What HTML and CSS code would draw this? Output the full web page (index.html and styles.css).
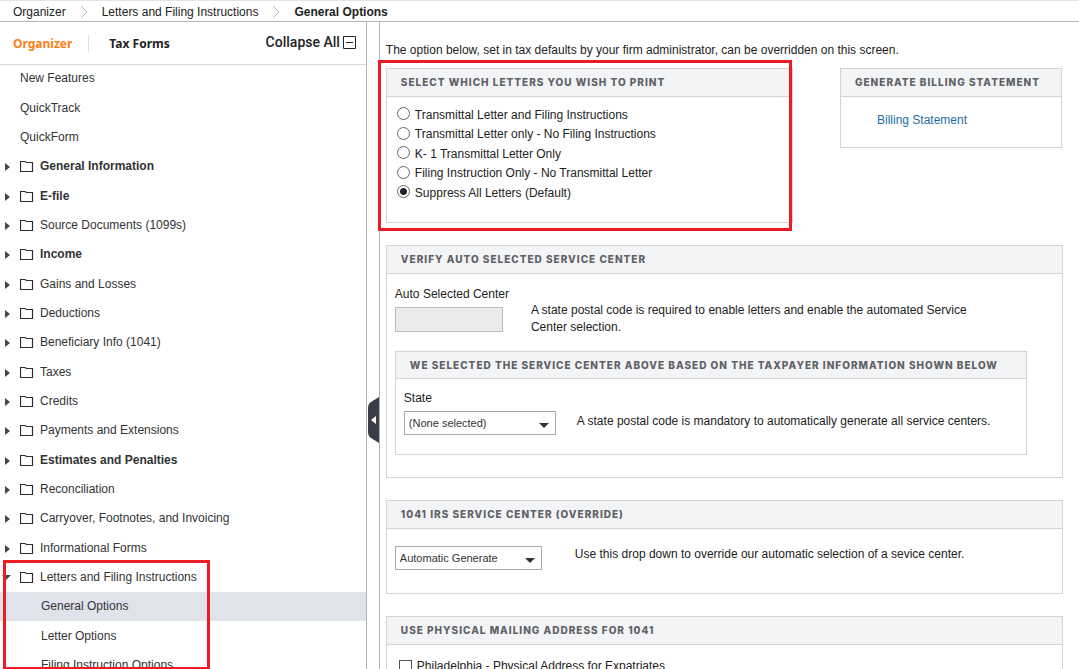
FILE: index.html
```html
<!DOCTYPE html>
<html lang="en">
<head>
    <meta charset="utf-8">
    <title>General Options</title>
    <link rel="stylesheet" href="styles.css">
</head>
<body>
    <svg class="defs" width="0" height="0">
        <symbol id="folder" viewBox="0 0 14 13">
            <path d="M.5 11.5V1.5h4.5l1.5 1h6v9z" fill="none" stroke="#2b2d33" stroke-width="1.2"/>
        </symbol>
    </svg>

    <nav class="breadcrumb">
        <a href="#">Organizer</a>
        <svg class="chevron" width="8" height="14" viewBox="0 0 8 14"><path d="M1 1l6 6-6 6" fill="none" stroke="#b5b5b5"/></svg>
        <a href="#">Letters and Filing Instructions</a>
        <svg class="chevron" width="8" height="14" viewBox="0 0 8 14"><path d="M1 1l6 6-6 6" fill="none" stroke="#b5b5b5"/></svg>
        <span class="current">General Options</span>
    </nav>

    <div class="workspace">
        <aside class="sidebar">
            <div class="sidebar-header">
                <a href="#" class="tab active">Organizer</a>
                <a href="#" class="tab">Tax Forms</a>
                <button class="collapse-all">Collapse All
                    <svg width="13" height="13" viewBox="0 0 13 13"><path d="M.5.5h12v12H.5zM3 6.5h7" fill="none" stroke="#222"/></svg>
                </button>
            </div>
            <ul class="tree">
                <li><a href="#" class="leaf">New Features</a></li>
                <li><a href="#" class="leaf">QuickTrack</a></li>
                <li><a href="#" class="leaf">QuickForm</a></li>
                <li><a href="#" class="folder bold"><svg><use href="#folder"/></svg>General Information</a></li>
                <li><a href="#" class="folder bold"><svg><use href="#folder"/></svg>E-file</a></li>
                <li><a href="#" class="folder"><svg><use href="#folder"/></svg>Source Documents (1099s)</a></li>
                <li><a href="#" class="folder bold"><svg><use href="#folder"/></svg>Income</a></li>
                <li><a href="#" class="folder"><svg><use href="#folder"/></svg>Gains and Losses</a></li>
                <li><a href="#" class="folder"><svg><use href="#folder"/></svg>Deductions</a></li>
                <li><a href="#" class="folder"><svg><use href="#folder"/></svg>Beneficiary Info (1041)</a></li>
                <li><a href="#" class="folder"><svg><use href="#folder"/></svg>Taxes</a></li>
                <li><a href="#" class="folder"><svg><use href="#folder"/></svg>Credits</a></li>
                <li><a href="#" class="folder"><svg><use href="#folder"/></svg>Payments and Extensions</a></li>
                <li><a href="#" class="folder bold"><svg><use href="#folder"/></svg>Estimates and Penalties</a></li>
                <li><a href="#" class="folder"><svg><use href="#folder"/></svg>Reconciliation</a></li>
                <li><a href="#" class="folder"><svg><use href="#folder"/></svg>Carryover, Footnotes, and Invoicing</a></li>
                <li><a href="#" class="folder"><svg><use href="#folder"/></svg>Informational Forms</a></li>
                <li class="marked">
                    <a href="#" class="folder open"><svg><use href="#folder"/></svg>Letters and Filing Instructions</a>
                    <ul>
                        <li><a href="#" class="child selected">General Options</a></li>
                        <li><a href="#" class="child">Letter Options</a></li>
                        <li><a href="#" class="child">Filing Instruction Options</a></li>
                    </ul>
                    <div class="highlight highlight-tree"></div>
                </li>
            </ul>
        </aside>

        <div class="splitter">
            <button class="splitter-handle" aria-label="Collapse panel">
                <svg width="11" height="46" viewBox="0 0 11 46"><path d="M11 0v46L3 41Q0 39 0 35V11Q0 7 3 5z" fill="#3a3d45"/><path d="M3 23l5-4v8z" fill="#fff"/></svg>
            </button>
        </div>

        <main class="content">
            <p class="intro">The option below, set in tax defaults by your firm administrator, can be overridden on this screen.</p>

            <div class="top-row">
                <section class="panel letters">
                    <h2>Select which letters you wish to print</h2>
                    <div class="radio-list">
                        <label><input type="radio" name="letters">Transmittal Letter and Filing Instructions</label>
                        <label><input type="radio" name="letters">Transmittal Letter only - No Filing Instructions</label>
                        <label><input type="radio" name="letters">K- 1 Transmittal Letter Only</label>
                        <label><input type="radio" name="letters">Filing Instruction Only - No Transmittal Letter</label>
                        <label><input type="radio" name="letters" checked>Suppress All Letters (Default)</label>
                    </div>
                    <div class="highlight highlight-letters"></div>
                </section>

                <section class="panel billing">
                    <h2>Generate billing statement</h2>
                    <a href="#" class="link">Billing Statement</a>
                </section>
            </div>

            <section class="panel">
                <h2>Verify auto selected service center</h2>
                <div class="panel-body">
                    <div class="auto-row">
                        <div class="field">
                            <label for="autoCenter">Auto Selected Center</label>
                            <input type="text" id="autoCenter" disabled>
                        </div>
                        <p class="auto-note">A state postal code is required to enable letters and enable the automated Service Center selection.</p>
                    </div>

                    <section class="panel inner">
                        <h2>We selected the service center above based on the taxpayer information shown below</h2>
                        <div class="state-row">
                            <div class="field">
                                <label for="state">State</label>
                                <div class="select-box state-select">
                                    <select id="state"><option>(None selected)</option></select>
                                </div>
                            </div>
                            <p>A state postal code is mandatory to automatically generate all service centers.</p>
                        </div>
                    </section>
                </div>
            </section>

            <section class="panel">
                <h2>1041 IRS service center (override)</h2>
                <div class="override-row">
                    <div class="select-box override-select">
                        <select id="override" aria-label="Service center override"><option>Automatic Generate</option></select>
                    </div>
                    <p>Use this drop down to override our automatic selection of a sevice center.</p>
                </div>
            </section>

            <section class="panel">
                <h2>Use physical mailing address for 1041</h2>
                <label class="check-row"><input type="checkbox">Philadelphia - Physical Address for Expatriates</label>
            </section>
        </main>
    </div>
</body>
</html>
```
FILE: styles.css
```css
* {
    box-sizing: border-box;
}
body {
    margin: 0;
    height: 100vh;
    overflow: hidden;
    display: flex;
    flex-direction: column;
    font-family: "Liberation Sans", Arial, sans-serif;
    font-size: 12px;
    line-height: 17px;
    color: #222;
    background: #fff;
}
a {
    color: inherit;
    text-decoration: none;
}
p, h2, ul {
    margin: 0;
    padding: 0;
}
button {
    padding: 0;
    border: 0;
    background: none;
    color: inherit;
    cursor: pointer;
}
.defs {
    position: absolute;
}

/* breadcrumb */
.breadcrumb {
    display: flex;
    align-items: center;
    flex: none;
    gap: 14px;
    height: 22px;
    padding: 2px 13px 0;
    border-top: 1px solid #e4e4e4;
    border-bottom: 1px solid #b5b5b5;
}
.current {
    font-weight: bold;
}

.workspace {
    display: flex;
    flex: 1;
    min-height: 0;
}

/* sidebar */
.sidebar {
    flex: 0 0 34%;
    border-right: 1px solid #b5b5b5;
    overflow: hidden;
}
.sidebar-header {
    display: flex;
    align-items: center;
    height: 43px;
    padding: 0 10px 0 13px;
    border-bottom: 1px solid #d8d8d8;
}
.tab {
    font: bold 12px/17px "Noto Sans", sans-serif;
}
.tab.active {
    color: #fb8114;
    padding-right: 16px;
    margin-right: 20px;
    border-right: 1px solid #eadcdc;
}
.collapse-all {
    display: flex;
    align-items: center;
    gap: 3px;
    margin-left: auto;
    padding-bottom: 2px;
    font: 500 14px/17px Roboto, sans-serif;
}
.tree {
    margin-top: -1px;
    color: #333;
}
.tree li {
    list-style: none;
}
.tree li:nth-child(3n+1) {
    padding-bottom: 1px;
}
.tree a {
    display: flex;
    align-items: center;
    height: 29px;
}
.leaf {
    padding-left: 20px;
}
.folder svg {
    width: 14px;
    height: 13px;
    margin: 0 6px 0 10px;
}
.folder::before {
    content: "";
    width: 0;
    margin-left: 5px;
    border-left: 5px solid #444;
    border-top: 4px solid transparent;
    border-bottom: 4px solid transparent;
}
.folder.open::before {
    margin: 0 -1px 0 2px;
    border-top: 5px solid #444;
    border-left: 4px solid transparent;
    border-right: 5px solid transparent;
    border-bottom: 0;
}
.bold {
    font-weight: bold;
}
.child {
    padding-left: 41px;
}
.selected {
    background: #e0e3eb;
}
.marked {
    position: relative;
}

/* red call-outs */
.highlight {
    position: absolute;
    border: 3px solid #ed1c24;
    pointer-events: none;
}
.highlight-tree {
    top: -3px;
    left: 3px;
    width: 207px;
    height: 110px;
}
.highlight-letters {
    inset: -9px 0 -9px -9px;
}

/* splitter */
.splitter {
    position: relative;
    flex: 0 0 13px;
    border-right: 1px solid #b5b5b5;
}
.splitter-handle {
    position: absolute;
    right: 0;
    top: 58%;
    height: 46px;
    line-height: 0;
}

/* content */
.content {
    display: flex;
    flex-direction: column;
    flex: 1;
    gap: 22px;
    min-width: 0;
    padding: 20px 16px 0 6px;
}
.intro {
    margin-bottom: -13px;
}
.top-row {
    display: flex;
    align-items: flex-start;
    gap: 47px;
    padding-right: 1px;
}
.panel {
    border: 1px solid #d3d4d6;
    flex: none;
}
.panel h2 {
    padding: 0 14px;
    border-bottom: 1px solid #d3d4d6;
    background: #f3f4f6;
    color: #5f6167;
    font: 800 10px/27px Inter, sans-serif;
    letter-spacing: 1px;
    text-transform: uppercase;
    white-space: nowrap;
}
.letters {
    position: relative;
    flex: 1;
}
.radio-list {
    padding: 8px 10px 19px;
}
.radio-list label {
    display: flex;
    align-items: center;
    gap: 5px;
    height: 19px;
}
.radio-list label:nth-child(odd) {
    height: 20px;
}
.radio-list input {
    width: 13px;
    height: 13px;
    margin: 0 0 3px;
    appearance: none;
    border: 1px solid #666;
    border-radius: 50%;
}
.radio-list input:checked {
    background: radial-gradient(circle, #222 3px, #fff 4px);
}
.billing {
    width: 222px;
}
.link {
    display: block;
    padding: 15px 36px 18px;
    color: #1c6ea4;
}
.panel-body {
    padding: 12px 35px 22px 8px;
}
.auto-row {
    display: flex;
    gap: 22px;
    margin-bottom: 15px;
}
.auto-note {
    max-width: 460px;
    padding-top: 16px;
}
.field label {
    display: block;
    margin-bottom: 4px;
}
#autoCenter {
    display: block;
    width: 108px;
    height: 25px;
    border: 1px solid #bcbcbc;
    background: #ebebeb;
}
.inner h2 {
    line-height: 26px;
}
.state-row {
    display: flex;
    align-items: flex-end;
    gap: 21px;
    padding: 11px 8px 19px;
}
.state-row p {
    padding-bottom: 5px;
}
.select-box {
    position: relative;
    height: 24px;
}
.select-box::after {
    content: "";
    position: absolute;
    right: 7px;
    top: 12px;
    border-top: 5px solid #333;
    border-left: 5px solid transparent;
    border-right: 5px solid transparent;
    pointer-events: none;
}
.select-box select {
    width: 100%;
    height: 24px;
    padding: 0 4px;
    appearance: none;
    border: 1px solid #aaa;
    border-radius: 0;
    background: #fff;
    color: #333;
    font: 11px "Liberation Sans", Arial, sans-serif;
}
.state-select {
    width: 152px;
}
.override-select {
    width: 147px;
}
.override-row {
    display: flex;
    gap: 33px;
    padding: 17px 8px 23px;
}
.check-row {
    display: flex;
    align-items: center;
    gap: 5px;
    height: 43px;
    padding-left: 12px;
}
.check-row input {
    width: 13px;
    height: 13px;
    margin: 0;
    appearance: none;
    border: 1px solid #555;
}
```
